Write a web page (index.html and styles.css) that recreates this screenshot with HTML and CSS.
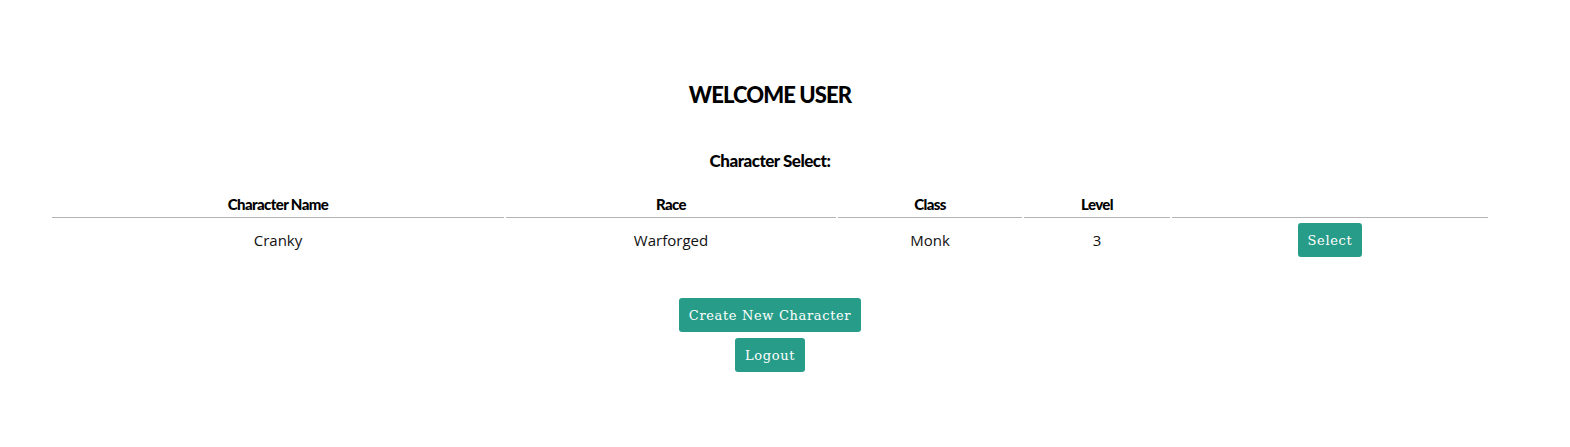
FILE: index.html
```html
<!DOCTYPE html>
<html>
<head>
<meta charset="utf-8">
<link rel="stylesheet" href="styles.css">
</head>
<body>
<main class="page">
  <h1 class="title">WELCOME USER</h1>
  <h2 class="subtitle">Character Select:</h2>
  <table class="chars">
    <colgroup>
      <col class="c1"><col class="c2"><col class="c3"><col class="c4"><col class="c5">
    </colgroup>
    <thead>
      <tr>
        <th>Character Name</th>
        <th>Race</th>
        <th>Class</th>
        <th>Level</th>
        <th></th>
      </tr>
    </thead>
    <tbody>
      <tr>
        <td>Cranky</td>
        <td>Warforged</td>
        <td>Monk</td>
        <td>3</td>
        <td><button class="btn">Select</button></td>
      </tr>
    </tbody>
  </table>
  <div class="actions">
    <button class="btn">Create New Character</button>
    <button class="btn">Logout</button>
  </div>
</main>
</body>
</html>
```

FILE: styles.css
```css
html, body {
  margin: 0;
  padding: 0;
  background: #ffffff;
}

.page {
  padding: 0 80px 0 50px;
  display: flex;
  flex-direction: column;
  align-items: center;
  font-family: "Open Sans", "Noto Sans", sans-serif;
  color: #111;
}

.title {
  font-family: Lato, "Liberation Sans", sans-serif;
  font-weight: 900;
  font-size: 22px;
  letter-spacing: -0.9px;
  margin: 81px 0 0 0;
  line-height: 28px;
  color: #000;
}

.subtitle {
  font-family: Lato, "Liberation Sans", sans-serif;
  font-weight: 900;
  font-size: 17px;
  letter-spacing: -0.5px;
  margin: 41px 0 0 0;
  line-height: 22px;
  color: #000;
}

.chars {
  width: 100%;
  border-collapse: separate;
  border-spacing: 2px;
  margin-top: 19px;
  table-layout: fixed;
}

.c1 { width: 452px; }
.c2 { width: 330px; }
.c3 { width: 184px; }
.c4 { width: 146px; }
.c5 { width: auto; }

.chars th {
  font-family: Lato, "Liberation Sans", sans-serif;
  font-weight: 900;
  font-size: 15px;
  letter-spacing: -0.6px;
  color: #000;
  padding: 2px 0 4px;
  border-bottom: 1px solid #b4b4b4;
  line-height: 18px;
}

.chars td {
  text-align: center;
  font-size: 15px;
  padding: 3px 0 1px;
  line-height: 20px;
}

.btn {
  font-family: "DejaVu Serif", "Liberation Serif", serif;
  font-size: 13px;
  letter-spacing: 0.65px;
  color: #fff;
  background: #279c88;
  border: none;
  border-radius: 3px;
  padding: 0 10px;
  height: 34px;
  cursor: pointer;
}

.actions {
  display: flex;
  flex-direction: column;
  align-items: center;
  gap: 6px;
  margin-top: 38px;
}
```
